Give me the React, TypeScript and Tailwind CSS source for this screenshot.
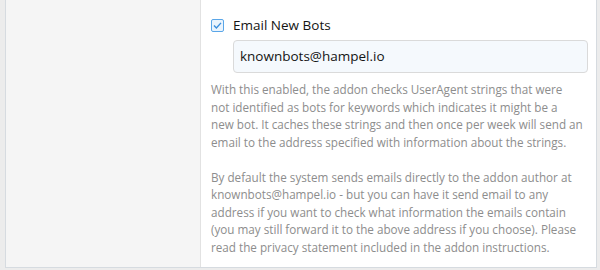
import React from "react";

const para1 = [
  "With this enabled, the addon checks UserAgent strings that were",
  "not identified as bots for keywords which indicates it might be a",
  "new bot. It caches these strings and then once per week will send an",
  "email to the address specified with information about the strings.",
];

const para2 = [
  "By default the system sends emails directly to the addon author at",
  "knownbots@hampel.io - but you can have it send email to any",
  "address if you want to check what information the emails contain",
  "(you may still forward it to the above address if you choose). Please",
  "read the privacy statement included in the addon instructions.",
];

export default function App() {
  return (
    <div className="w-[600px] h-[270px] overflow-hidden bg-[#ececec] font-['Open_Sans',sans-serif]">
      <div className="ml-[5px] mr-[3px] flex border-x border-b border-[#d6dbe0]">
        <div className="w-[195px] shrink-0 bg-[#f5f5f5] border-r border-[#e2e2e2]" />
        <div className="flex-1 bg-white pl-[10px] pr-[8px] pt-[15px] pb-[11px]">
          <label className="flex h-[20px] items-center gap-[9px]">
            <svg width="13" height="13" viewBox="0 0 13 13" className="shrink-0">
              <rect x="0.5" y="0.5" width="12" height="12" rx="1.5" fill="#eaf4fd" stroke="#5aa6e8" />
              <path d="M3 6.6 L5.4 9 L10 3.9" fill="none" stroke="#3b8edb" strokeWidth="1.4" />
            </svg>
            <span className="text-[13.5px] leading-[20px] text-[#141414]">Email New Bots</span>
          </label>
          <div className="mt-[5px] ml-[22px] h-[33px] w-[355px] rounded-[4px] border border-[#dadada] bg-[#f5f9fd] pl-[6px] text-[13.5px] leading-[31px] text-[#141414]">
            knownbots@hampel.io
          </div>
          <div className="mt-[8px] w-[377px] whitespace-nowrap text-[11.7px] leading-[17.5px] text-[#8d8d8d]">
            <p>
              {para1.map((l, i) => (
                <React.Fragment key={i}>
                  {l}
                  {i < para1.length - 1 && <br />}
                </React.Fragment>
              ))}
            </p>
            <p className="mt-[17.5px]">
              {para2.map((l, i) => (
                <React.Fragment key={i}>
                  {l}
                  {i < para2.length - 1 && <br />}
                </React.Fragment>
              ))}
            </p>
          </div>
        </div>
      </div>
    </div>
  );
}
